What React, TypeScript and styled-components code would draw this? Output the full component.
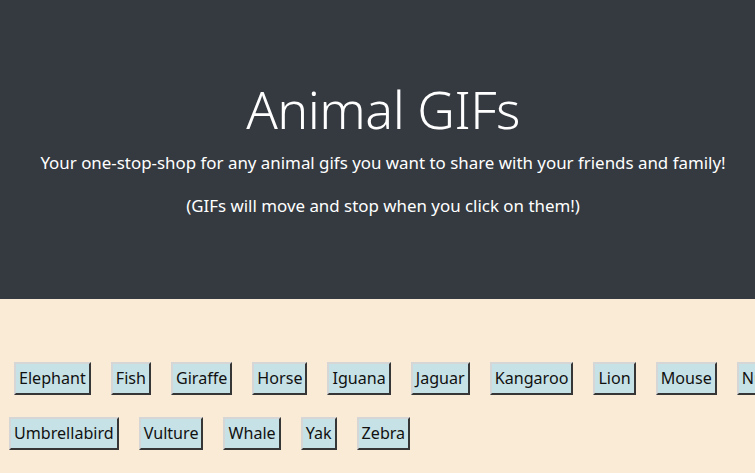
import React from "react";
import styled, { createGlobalStyle } from "styled-components";

const Global = createGlobalStyle`
  html, body { margin: 0; padding: 0; }
  body {
    background: #faebd7;
    font-family: "Noto Sans", "Open Sans", sans-serif;
    overflow: hidden;
    width: 755px;
    height: 473px;
  }
`;

const Page = styled.div`
  display: flex;
  flex-direction: column;
  width: 766px;
`;

const Hero = styled.header`
  background: #343a40;
  color: #ffffff;
  height: 299px;
  box-sizing: border-box;
  padding-top: 74px;
  display: flex;
  flex-direction: column;
  align-items: center;
  text-align: center;
`;

const Title = styled.h1`
  margin: 0 0 5px;
  font-size: 52px;
  font-weight: 300;
  line-height: 70px;
  letter-spacing: -0.5px;
`;

const Lead = styled.p`
  margin: 0 0 16px;
  font-size: 16.9px;
  line-height: 27px;
  font-weight: 400;
`;

const ButtonList = styled.div`
  display: flex;
  flex-wrap: wrap;
  width: 830px;
  column-gap: 20px;
  row-gap: 22px;
  padding: 63px 0 0 9px;

  & > button:first-child {
    margin-left: 5px;
  }
`;

const AnimalButton = styled.button`
  font-family: "Noto Sans", "Open Sans", sans-serif;
  font-size: 16.1px;
  line-height: 27px;
  color: #111;
  background: #c7e2e6;
  border: 2px outset #d6d6d6;
  border-right-color: #8a8a8a;
  border-bottom-color: #8a8a8a;
  padding: 1px 3px;
  margin: 0;
  cursor: pointer;
`;

const animals = [
  "Elephant",
  "Fish",
  "Giraffe",
  "Horse",
  "Iguana",
  "Jaguar",
  "Kangaroo",
  "Lion",
  "Mouse",
  "Numbat",
  "Umbrellabird",
  "Vulture",
  "Whale",
  "Yak",
  "Zebra",
];

export default function App() {
  return (
    <>
      <Global />
      <Page>
        <Hero>
          <Title>Animal GIFs</Title>
          <Lead>
            Your one-stop-shop for any animal gifs you want to share with your
            friends and family!
          </Lead>
          <Lead>(GIFs will move and stop when you click on them!)</Lead>
        </Hero>
        <ButtonList>
          {animals.map((a) => (
            <AnimalButton key={a}>{a}</AnimalButton>
          ))}
        </ButtonList>
      </Page>
    </>
  );
}
